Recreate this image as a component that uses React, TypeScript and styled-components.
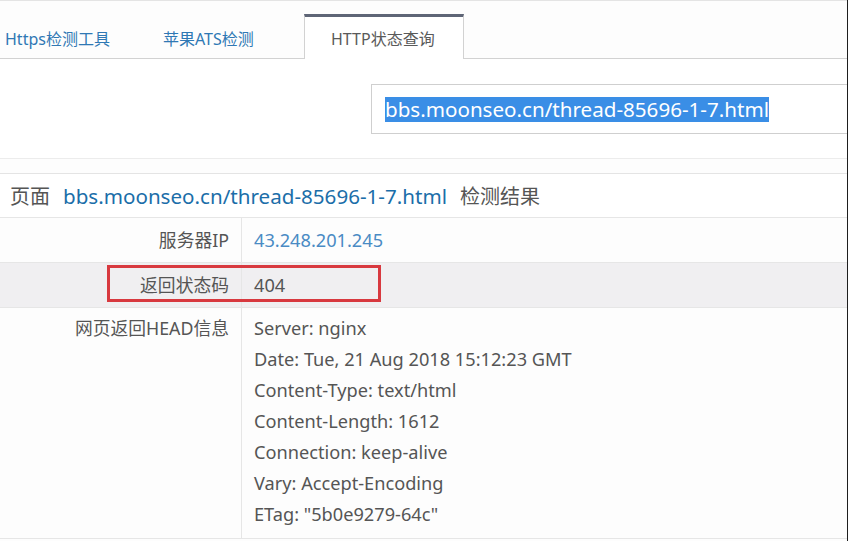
import React from "react";
import styled, { createGlobalStyle } from "styled-components";

const GlobalStyle = createGlobalStyle`
	html, body {
		margin: 0;
		padding: 0;
		background: #ffffff;
	}
	body {
		font-family: "Noto Sans", "Noto Sans CJK SC", sans-serif;
		color: #555;
	}
`;

const Page = styled.div`
	width: 848px;
	height: 541px;

	display: flex;
	flex-direction: column;
	overflow: hidden;
	box-sizing: border-box;

	border-right: 1px solid #1e1e1e;
	background: #fdfdfd;
`;

const TabBar = styled.div`
	height: 59px;

	display: flex;
	align-items: flex-end;
	box-sizing: border-box;

	border-top: 1px solid #e4e4e4;
	border-bottom: 1px solid #d2d2d2;
`;

const Tab = styled.div<{ $width: number; $pad: number; $active?: boolean }>`
	width: ${({ $width }) => $width}px;
	height: ${({ $active }) => ($active ? "45px" : "44px")};
	padding-left: ${({ $pad }) => $pad}px;

	display: flex;
	align-items: center;
	box-sizing: border-box;
	margin-bottom: ${({ $active }) => ($active ? "-1px" : "0")};

	font-size: 16px;
	color: ${({ $active }) => ($active ? "#5a5a5a" : "#2f78b4")};
	background: ${({ $active }) => ($active ? "#ffffff" : "transparent")};
	border-top: 3px solid ${({ $active }) => ($active ? "#5e6576" : "transparent")};
	border-left: 1px solid ${({ $active }) => ($active ? "#d2d2d2" : "transparent")};
	border-right: 1px solid ${({ $active }) => ($active ? "#d2d2d2" : "transparent")};
`;

const SearchArea = styled.div`
	height: 100px;
	padding-top: 25px;
	padding-left: 371px;

	box-sizing: border-box;
	border-bottom: 1px solid #ececec;
	background: #ffffff;
`;

const InputBox = styled.div`
	height: 50px;
	padding-left: 13px;

	display: flex;
	align-items: center;
	box-sizing: border-box;

	border: 1px solid #cfcfcf;
	border-right: none;
	background: #ffffff;
`;

const Selected = styled.span`
	font-size: 20.6px;
	line-height: 25px;
	color: #ffffff;
	background: #3a8ee6;
`;

const Spacer = styled.div`
	height: 14px;
	border-bottom: 1px solid #e4e4e4;
	background: #fdfdfd;
`;

const ResultHead = styled.div`
	height: 44px;
	padding-left: 10px;

	display: flex;
	align-items: center;
	gap: 13px;
	box-sizing: border-box;

	font-size: 20px;
	color: #555;
	border-bottom: 1px solid #e6e6e6;
	background: #ffffff;
`;

const HeadLink = styled.span`
	font-size: 20.6px;
	color: #1b6ea9;
`;

const Row = styled.div<{ $shade?: boolean }>`
	display: grid;
	grid-template-columns: 242px 1fr;
	position: relative;

	background: ${({ $shade }) => ($shade ? "#f0eff1" : "#fdfdfd")};
	border-bottom: 1px solid #e6e6e6;
	font-size: 17.8px;
`;

const Label = styled.div<{ $top?: boolean }>`
	padding: ${({ $top }) => ($top ? "5px 12px 8px 0" : "0 12px 0 0")};
	min-height: 44px;

	display: flex;
	align-items: ${({ $top }) => ($top ? "flex-start" : "center")};
	justify-content: flex-end;

	line-height: 31px;
	color: #555;
	border-right: 1px solid #e6e6e6;
`;

const Value = styled.div<{ $link?: boolean; $top?: boolean }>`
	padding: ${({ $top }) => ($top ? "5px 0 8px 12px" : "0 0 0 12px")};

	display: flex;
	flex-direction: column;
	justify-content: ${({ $top }) => ($top ? "flex-start" : "center")};

	font-size: 18.2px;
	line-height: 31px;
	color: ${({ $link }) => ($link ? "#4a8bc4" : "#555")};
`;

const Highlight = styled.div`
	position: absolute;
	left: 107px;
	top: 2px;
	width: 274px;
	height: 37px;

	box-sizing: border-box;
	border: 3px solid #d8393f;
	pointer-events: none;
`;

const headers = [
	"Server: nginx",
	"Date: Tue, 21 Aug 2018 15:12:23 GMT",
	"Content-Type: text/html",
	"Content-Length: 1612",
	"Connection: keep-alive",
	"Vary: Accept-Encoding",
	'ETag: "5b0e9279-64c"',
];

function App() {
	const url = "bbs.moonseo.cn/thread-85696-1-7.html";
	return (
		<>
			<GlobalStyle />
			<Page>
				<TabBar>
					<Tab $width={137} $pad={4}>
						Https检测工具
					</Tab>
					<Tab $width={167} $pad={25}>
						苹果ATS检测
					</Tab>
					<Tab $width={160} $pad={26} $active>
						HTTP状态查询
					</Tab>
				</TabBar>
				<SearchArea>
					<InputBox>
						<Selected>{url}</Selected>
					</InputBox>
				</SearchArea>
				<Spacer />
				<ResultHead>
					<span>页面</span>
					<HeadLink>{url}</HeadLink>
					<span>检测结果</span>
				</ResultHead>
				<Row>
					<Label>服务器IP</Label>
					<Value $link>43.248.201.245</Value>
				</Row>
				<Row $shade>
					<Label>返回状态码</Label>
					<Value>404</Value>
					<Highlight />
				</Row>
				<Row>
					<Label $top>网页返回HEAD信息</Label>
					<Value $top>
						{headers.map((line) => (
							<span key={line}>{line}</span>
						))}
					</Value>
				</Row>
			</Page>
		</>
	);
}

export default App;
